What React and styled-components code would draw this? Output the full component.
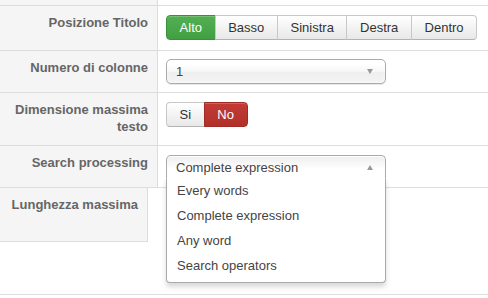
import React, { useState } from 'react';
import styled, { createGlobalStyle, css } from 'styled-components';

const GlobalStyle = createGlobalStyle`
  html, body {
    margin: 0;
    padding: 0;
    background: #fff;
  }
  body {
    font-family: "Liberation Sans", Arial, sans-serif;
    font-size: 13px;
    color: #333;
  }
`;

const Form = styled.div`
  width: 488px;
  border-bottom: 1px solid #ddd;
`;

const Row = styled.div`
  display: flex;
  align-items: stretch;
  height: ${(p) => p.height}px;
  border-top: ${(p) => (p.first ? 'none' : '1px solid #ddd')};
`;

const Label = styled.div`
  flex: 0 0 148px;
  width: 148px;
  padding: ${(p) => (p.empty ? '0' : '8px 9px 0 0')};
  box-sizing: content-box;
  background: #f5f5f5;
  border-right: 1px solid #ddd;
  text-align: right;
  font-weight: bold;
  font-size: 13px;
  line-height: 17px;
  color: #666;
  ${(p) =>
    p.empty &&
    css`
      flex-basis: 157px;
      width: 157px;
    `}
  ${(p) =>
    p.short &&
    css`
      align-self: flex-start;
      height: ${p.short}px;
      box-sizing: border-box;
      border-bottom: 1px solid #ddd;
    `}
`;

const Field = styled.div`
  flex: 1;
  padding: ${(p) => p.top ?? 9}px 0 0 8px;
  position: relative;
`;

const Group = styled.div`
  display: flex;
  width: max-content;
`;

const variants = {
  default: css`
    color: #333;
    background: linear-gradient(#ffffff, #e8e8e8);
    border-color: #c8c8c8 #c8c8c8 #b3b3b3;
  `,
  success: css`
    color: #fff;
    background: linear-gradient(#52b052, #42a042);
    border-color: #3a8f3a;
  `,
  danger: css`
    color: #fff;
    background: linear-gradient(#c23b34, #b2302a);
    border-color: #a02a25;
  `,
};

const Btn = styled.button`
  height: 25px;
  padding: 0 12.6px;
  margin-left: -1px;
  font-family: inherit;
  font-size: 13px;
  line-height: 23px;
  border: 1px solid;
  border-radius: 0;
  box-shadow: inset 0 1px 0 rgba(255, 255, 255, 0.2);
  cursor: pointer;
  ${(p) => variants[p.variant || 'default']}
  &:first-child {
    margin-left: 0;
    border-radius: 4px 0 0 4px;
  }
  &:last-child {
    border-radius: 0 4px 4px 0;
  }
`;

const Select = styled.div`
  width: 220px;
  height: ${(p) => (p.open ? 24 : 25)}px;
  box-sizing: border-box;
  display: flex;
  align-items: center;
  justify-content: space-between;
  padding: 0 9px 0 9px;
  border: 1px solid #aaa;
  border-radius: ${(p) => (p.open ? '5px 5px 0 0' : '5px')};
  border-bottom-color: ${(p) => (p.open ? '#fff' : '#aaa')};
  background: ${(p) =>
    p.open
      ? 'linear-gradient(#eeeeee 0%, #ffffff 60%)'
      : 'linear-gradient(#ffffff 20%, #f6f6f6 50%, #eeeeee 52%, #f4f4f4 100%)'};
  color: #444;
  font-size: 13px;
  box-shadow: ${(p) => (p.open ? '0 1px 0 #fff inset' : '0 0 3px #fff inset, 0 1px 1px rgba(0,0,0,0.1)')};
  position: relative;
  z-index: 2;
  cursor: pointer;
`;

const Arrow = styled.span`
  width: 0;
  height: 0;
  border-left: 3.5px solid transparent;
  border-right: 3.5px solid transparent;
  ${(p) =>
    p.up
      ? css`border-bottom: 5px solid #999;`
      : css`border-top: 5px solid #999;`}
  margin-right: 3px;
`;

const Drop = styled.ul`
  position: absolute;
  top: 32px;
  left: 8px;
  width: 220px;
  box-sizing: border-box;
  margin: 0;
  padding: 0 0 4px;
  list-style: none;
  background: #fff;
  border: 1px solid #aaa;
  border-top: none;
  border-radius: 0 0 4px 4px;
  box-shadow: 0 4px 5px rgba(0, 0, 0, 0.15);
  z-index: 1;
`;

const Option = styled.li`
  height: 25px;
  line-height: 25px;
  padding: 0 10px;
  color: #444;
  font-size: 13px;
  cursor: pointer;
  &:hover {
    background: #3875d7;
    color: #fff;
  }
`;

const positions = ['Alto', 'Basso', 'Sinistra', 'Destra', 'Dentro'];
const searchOptions = ['Every words', 'Complete expression', 'Any word', 'Search operators'];

export default function App() {
  const [pos, setPos] = useState('Alto');
  const [maxText, setMaxText] = useState('No');
  const [search, setSearch] = useState('Complete expression');
  const [open, setOpen] = useState(true);

  return (
    <>
      <GlobalStyle />
      <Form>
        <Row first height={5}>
          <Label empty />
        </Row>
        <Row height={44}>
          <Label>Posizione Titolo</Label>
          <Field>
            <Group>
              {positions.map((p) => (
                <Btn
                  key={p}
                  variant={pos === p ? 'success' : 'default'}
                  onClick={() => setPos(p)}
                >
                  {p}
                </Btn>
              ))}
            </Group>
          </Field>
        </Row>
        <Row height={41}>
          <Label>Numero di colonne</Label>
          <Field top={8}>
            <Select>
              <span>1</span>
              <Arrow />
            </Select>
          </Field>
        </Row>
        <Row height={52}>
          <Label>Dimensione massima testo</Label>
          <Field>
            <Group>
              <Btn variant={maxText === 'Si' ? 'success' : 'default'} onClick={() => setMaxText('Si')}>
                Si
              </Btn>
              <Btn variant={maxText === 'No' ? 'danger' : 'default'} onClick={() => setMaxText('No')}>
                No
              </Btn>
            </Group>
          </Field>
        </Row>
        <Row height={41}>
          <Label>Search processing</Label>
          <Field>
            <Select open={open} onClick={() => setOpen(!open)}>
              <span>{search}</span>
              <Arrow up={open} />
            </Select>
            {open && (
              <Drop>
                {searchOptions.map((o) => (
                  <Option
                    key={o}
                    onClick={() => {
                      setSearch(o);
                      setOpen(false);
                    }}
                  >
                    {o}
                  </Option>
                ))}
              </Drop>
            )}
          </Field>
        </Row>
        <Row height={106}>
          <Label short={54}>Lunghezza massima</Label>
          <Field />
        </Row>
      </Form>
    </>
  );
}
